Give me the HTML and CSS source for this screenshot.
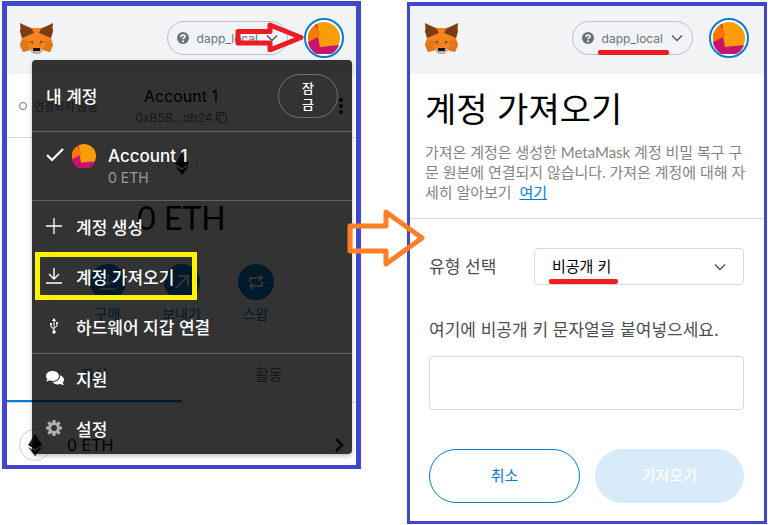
FILE: index.html
```html
<!DOCTYPE html>
<html lang="ko">
<head>
    <meta charset="UTF-8">
    <meta name="viewport" content="width=device-width, initial-scale=1.0">
    <title>계정 가져오기</title>
    <link rel="stylesheet" href="styles.css">
</head>
<body>

    <!-- Shared drawings -->
    <svg class="defs" aria-hidden="true">
        <symbol id="fox" viewBox="0 0 33 31">
            <path fill="#f5841f" d="M0 1 L12 5 H21 L33 1 V8 L31 15 L33 22 L30 29 L23 27 L19 30 H14 L10 27 L3 29 L0 22 L2 15 L0 8 Z"/>
            <path fill="#763e1a" d="M0 0 L12 6 L14 10 L9 12 L2 15 L0 8 L1 5 Z M33 0 L21 6 L19 10 L24 12 L31 15 L33 8 L32 5 Z"/>
            <path fill="#e2761b" d="M0 22 L8 23 L10 27 L3 29 Z M33 22 L25 23 L23 27 L30 29 Z"/>
            <path fill="#e4751f" d="M0 22 L2 17 L9 18 L8 23 Z M33 22 L31 17 L24 18 L25 23 Z"/>
            <path fill="#cd6116" d="M8 18 L14 20 L13 22 Z M25 18 L19 20 L20 22 Z"/>
            <path fill="#5c4a3a" d="M10 18 L13 18 L13 20 Z M23 18 L20 18 L20 20 Z"/>
            <path fill="#c0ad9e" d="M10 26 L13 26 H20 L23 26 L22 29 L19 31 H14 L11 29 Z"/>
            <path fill="#161616" d="M13 25 H20 V28 H13 Z"/>
        </symbol>
        <symbol id="blockie" viewBox="0 0 32 32">
            <circle cx="16" cy="16" r="16" fill="#f99d07"/>
            <path fill="#c8146c" d="M0 20 L10 14 L12 25 L31 23 A16 16 0 0 1 0 20 Z M7 3 L9 2 L10 9 Z"/>
            <path fill="#f77700" d="M7 3 A16 16 0 0 0 0 20 L10 15 L13 13 Z"/>
        </symbol>
        <symbol id="help" viewBox="0 0 12 12">
            <circle cx="6" cy="6" r="6" fill="#6a737d"/>
            <path d="M4 5 C4 2.5 8 2.5 8 4.6 C8 6 6 5.8 6 7.2" fill="none" stroke="#fff" stroke-width="1.6"/>
            <circle cx="6" cy="9.2" r="1" fill="#fff"/>
        </symbol>
        <symbol id="down" viewBox="0 0 12 8">
            <path d="M1 1.5 L6 6.5 L11 1.5" fill="none" stroke="currentColor" stroke-width="1.3"/>
        </symbol>
        <symbol id="eth" viewBox="0 0 14 22">
            <path fill="#343434" d="M7 0 L14 11 L7 15 L0 11 Z M7 22 L0 13 L7 17 L14 13 Z"/>
            <path fill="#141414" d="M7 0 L14 11 L7 15 Z M7 22 V17 L14 13 Z"/>
            <path fill="#000" d="M7 8 L14 11 L7 15 L0 11 Z" opacity=".5"/>
        </symbol>
        <symbol id="download" viewBox="0 0 16 16">
            <path d="M8 0 V11 M3 6 L8 11 L13 6 M0 15 H16" fill="none" stroke="currentColor" stroke-width="1.4"/>
        </symbol>
    </svg>

    <main class="board">

        <!-- Wallet home with the account menu open -->
        <section class="panel home">
            <header class="app-header">
                <svg class="logo"><use href="#fox"/></svg>
                <button class="network" type="button">
                    <svg class="icon-help"><use href="#help"/></svg>
                    <span class="network-name">dapp_local</span>
                    <svg class="icon-down"><use href="#down"/></svg>
                </button>
                <button class="avatar" type="button" aria-label="내 계정"><svg><use href="#blockie"/></svg></button>
            </header>

            <div class="account-bar">
                <div class="status"><i class="status-dot"></i>연결되지 않음</div>
                <div class="account">
                    <div class="account-title">Account 1</div>
                    <div class="address">0xB5B...db24
                        <svg class="icon-copy" viewBox="0 0 11 11"><path d="M3 3 H10.5 V10.5 H3 Z M3 8 H.5 V.5 H8 V3" fill="none" stroke="currentColor"/></svg>
                    </div>
                </div>
                <svg class="icon-more" viewBox="0 0 4 16"><circle cx="2" cy="2" r="2"/><circle cx="2" cy="8" r="2"/><circle cx="2" cy="14" r="2"/></svg>
            </div>

            <div class="overview">
                <span class="coin"><svg><use href="#eth"/></svg></span>
                <div class="balance">0 ETH</div>
                <div class="actions">
                    <button type="button" class="action">
                        <span class="round"><svg><use href="#download"/></svg></span>구매
                    </button>
                    <button type="button" class="action">
                        <span class="round"><svg viewBox="0 0 16 16"><path d="M2 14 L14 2 M4 2 H14 V12" fill="none" stroke="currentColor" stroke-width="2"/></svg></span>보내기
                    </button>
                    <button type="button" class="action">
                        <span class="round"><svg viewBox="0 0 16 16"><path d="M2 8 V4 H13 M11 1 L14 4 L11 7 M14 8 V12 H3 M5 9 L2 12 L5 15" fill="none" stroke="currentColor" stroke-width="2"/></svg></span>스왑
                    </button>
                </div>
            </div>

            <nav class="tabs">
                <button type="button" class="tab active">자산</button>
                <button type="button" class="tab">활동</button>
            </nav>

            <div class="asset">
                <span class="coin"><svg><use href="#eth"/></svg></span>
                <span class="asset-amount">0 ETH</span>
                <svg class="icon-next" viewBox="0 0 10 14"><path d="M2 1 L8 7 L2 13" fill="none" stroke="currentColor" stroke-width="2.5"/></svg>
            </div>

            <div class="menu">
                <div class="menu-header">
                    <span>내 계정</span>
                    <button type="button" class="lock">잠<br>금</button>
                </div>
                <div class="menu-account">
                    <svg class="icon-check" viewBox="0 0 18 14"><path d="M1 7 L6 12 L17 1" fill="none" stroke="#fff" stroke-width="2.2"/></svg>
                    <svg class="blockie"><use href="#blockie"/></svg>
                    <div>
                        <div class="menu-name">Account 1</div>
                        <div class="menu-balance">0 ETH</div>
                    </div>
                </div>
                <div class="menu-group">
                    <button type="button" class="menu-item">
                        <svg viewBox="0 0 16 16"><path d="M8 0 V16 M0 8 H16" stroke="currentColor" stroke-width="1.3"/></svg>계정 생성
                    </button>
                    <button type="button" class="menu-item marked">
                        <svg><use href="#download"/></svg>계정 가져오기
                    </button>
                    <button type="button" class="menu-item">
                        <svg viewBox="0 0 16 16"><g fill="none" stroke="currentColor"><path d="M8 2 V13 M8 11 L5 9 V6 M8 10 L11 8 V5"/></g><path fill="currentColor" d="M8 0 L10 3 H6 Z M4 5 H6 V7 H4 Z M10 4 H12 V6 H10 Z"/><circle cx="8" cy="14" r="1.7" fill="currentColor"/></svg>하드웨어 지갑 연결
                    </button>
                </div>
                <div class="menu-group">
                    <button type="button" class="menu-item">
                        <svg class="wide" viewBox="0 0 18 16"><path fill="currentColor" d="M6.5 1 C2.5 1 0 3.2 0 6 C0 7.2.6 8.3 1.3 9.1 C1.2 10 .6 10.800 0 11.500 C1.500 11.500 2.700 11 3.500 10.300 C4.400 10.700 5.400 11 6.500 11 C10.300 11 13 8.700 13 6 C13 3.200 10.300 1 6.500 1 Z"/><path fill="currentColor" d="M14 6 C14 9.500 10.700 12 6.500 12 C7.600 13.500 9.400 14.500 11.500 14.500 C12.600 14.500 13.600 14.200 14.500 13.700 C15.300 14.500 16.500 15 18 15 C17.300 14.300 16.800 13.500 16.700 12.700 C17.500 11.800 18 10.900 18 9.700 C18 7.800 16.400 6 14 5.300 Z"/></svg>지원
                    </button>
                    <button type="button" class="menu-item">
                        <svg class="gear" viewBox="0 0 16 16"><circle cx="8" cy="8" r="4.5" fill="none" stroke="currentColor" stroke-width="3"/><path d="M8 0 V3 M8 13 V16 M0 8 H3 M13 8 H16 M2.3 2.3 L4.5 4.5 M11.5 11.5 L13.7 13.7 M13.7 2.3 L11.5 4.5 M4.5 11.5 L2.3 13.7" stroke="currentColor" stroke-width="3"/></svg>설정
                    </button>
                </div>
            </div>
        </section>

        <!-- Import account form -->
        <section class="panel import">
            <header class="app-header">
                <svg class="logo"><use href="#fox"/></svg>
                <button class="network" type="button">
                    <svg class="icon-help"><use href="#help"/></svg>
                    <span class="network-name underlined">dapp_local</span>
                    <svg class="icon-down"><use href="#down"/></svg>
                </button>
                <button class="avatar" type="button" aria-label="내 계정"><svg><use href="#blockie"/></svg></button>
            </header>

            <div class="intro">
                <h1>계정 가져오기</h1>
                <p>가져온 계정은 생성한 MetaMask 계정 비밀 복구 구문 원본에 연결되지 않습니다. 가져온 계정에 대해 자세히 알아보기 <a href="#">여기</a></p>
            </div>

            <form class="import-form">
                <div class="type-row">
                    <label for="key-type">유형 선택</label>
                    <div class="select">
                        <select id="key-type">
                            <option>비공개 키</option>
                            <option>JSON 파일</option>
                        </select>
                        <svg class="icon-down"><use href="#down"/></svg>
                    </div>
                </div>
                <label class="key-label" for="private-key">여기에 비공개 키 문자열을 붙여넣으세요.</label>
                <input id="private-key" type="password">
                <div class="buttons">
                    <button type="button" class="cancel">취소</button>
                    <button type="submit" class="submit" disabled>가져오기</button>
                </div>
            </form>
        </section>

        <!-- Arrows between the steps -->
        <svg class="arrow arrow-red" viewBox="0 0 70 30"><path d="M4 9.5 H36 V3 L67 15.5 L36 28 V21 H4 Z"/></svg>
        <svg class="arrow arrow-orange" viewBox="0 0 78 58"><path d="M3 17 H39 V3 L75 29 L39 55 V42 H3 Z"/></svg>
    </main>

</body>
</html>
```

FILE: styles.css
```css
:root {
    --frame: #3f48cc; --blue: #037dd6; --line: #d6d9dc; --grey: #6a737d;
    --red: #ed1c24; --orange: #ff7f27; --yellow: #fff200;
    --font-family: Inter, "Noto Sans CJK KR", sans-serif;
    --font-narrow: Lato, "Noto Sans CJK KR", sans-serif;
}
*, *::after { margin: 0; padding: 0; box-sizing: border-box; }
body { font-family: var(--font-family); background: #fff; color: #000; }
button, input, select { font: inherit; color: inherit; background: none; border: none; }
button { cursor: pointer; }
svg { display: block; flex: none; }
.defs { position: absolute; width: 0; height: 0; }

.board { position: relative; display: grid; grid-template-columns: 359fr 360fr; align-items: start; gap: 46px; padding: 1px 1px 0 2px; }
.panel { position: relative; border: 5px solid var(--frame); }
.home { border-bottom-width: 4px; }
.import { margin-top: 1px; border-width: 4px 3px 3px; }

/* Header */
.app-header { display: flex; align-items: center; padding: 12px 12px 16px 13px; background: #f2f3f4; }
.import .app-header { padding: 12px 15px 16px; }
.logo { width: 33px; height: 31px; margin-right: auto; }
.network { display: flex; align-items: center; gap: 8px; height: 34px; padding: 0 9px; border: 1px solid #bbc0c5; border-radius: 17px; font-size: 12px; color: var(--grey); }
.network-name { position: relative; }
.icon-help { width: 12px; height: 12px; }
.icon-down { width: 12px; height: 8px; color: #4a5056; }
.underlined::after { content: ''; position: absolute; left: -4px; right: -6px; bottom: -9px; height: 5px; border-radius: 2px; background: var(--red); }
.avatar { display: grid; place-items: center; width: 40px; height: 40px; margin-left: 16px; border: 2px solid var(--blue); border-radius: 50%; background: #fff; }
.avatar svg { width: 32px; height: 32px; }

/* Home */
.account-bar { display: grid; grid-template-columns: 1fr auto 1fr; align-items: center; height: 64px; padding: 0 13px 0 12px; border-bottom: 1px solid var(--line); }
.status { display: flex; align-items: center; gap: 7px; font-size: 11px; color: var(--grey); white-space: nowrap; }
.status-dot { width: 8px; height: 8px; border: 1px solid var(--grey); border-radius: 50%; }
.account { text-align: center; }
.account-title { font-size: 16px; line-height: 24px; }
.address { display: flex; justify-content: center; align-items: center; gap: 3px; font-size: 12px; line-height: 20px; color: var(--grey); }
.icon-copy { width: 11px; height: 11px; }
.icon-more { width: 4px; height: 16px; justify-self: end; }
.overview { display: flex; flex-direction: column; align-items: center; padding-top: 10px; }
.coin { display: grid; place-items: center; width: 32px; height: 32px; border: 1px solid #d0d0d0; border-radius: 50%; }
.coin svg { width: 14px; height: 22px; }
.balance { margin: 18px 0 26px; font-family: var(--font-narrow); font-size: 32px; line-height: 40px; }
.actions { display: flex; gap: 14px; }
.action { display: flex; flex-direction: column; align-items: center; gap: 2px; width: 60px; font-size: 14px; line-height: 24px; color: var(--blue); }
.round { display: grid; place-items: center; width: 36px; height: 36px; border-radius: 50%; background: var(--blue); color: #fff; }
.round svg { width: 16px; height: 16px; }
.tabs { display: flex; margin-top: 20px; border-bottom: 1px solid var(--line); }
.tab { flex: 1; height: 56px; font-size: 15px; color: var(--grey); border-bottom: 2px solid transparent; }
.tab.active { color: var(--blue); border-color: var(--blue); }
.asset { display: flex; align-items: center; gap: 16px; padding: 26px 12px 4px; font-size: 16px; }
.icon-next { width: 10px; height: 14px; margin-left: auto; color: #24292e; }

/* Account menu */
.menu { position: absolute; top: 54px; left: 25px; right: 4px; border-radius: 4px; background: rgba(0, 0, 0, 0.8); color: #fff; font-size: 17px; box-shadow: 0 2px 4px rgba(0, 0, 0, 0.25); }
.menu-header, .menu-account, .menu-group { border-bottom: 1px solid #606060; }
.menu-header { display: flex; justify-content: space-between; align-items: center; height: 72px; padding: 0 14px; font-weight: 500; }
.lock { width: 60px; height: 44px; border: 1px solid var(--grey); border-radius: 22px; font-size: 13px; line-height: 16px; }
.menu-account { display: flex; height: 69px; padding: 12px 14px; }
.icon-check { width: 18px; height: 14px; margin: 4px 8px 0 0; }
.blockie { width: 24px; height: 24px; margin-right: 12px; }
.menu-name { font-size: 17px; font-weight: 500; line-height: 24px; }
.menu-balance { font-size: 14px; line-height: 20px; color: #9b9b9b; }
.menu-group { padding: 1px 0; }
.menu-group:last-child { padding: 0; border-bottom: none; }
.menu-item { position: relative; display: flex; align-items: center; gap: 14px; width: 100%; height: 50px; padding: 0 14px 2px; font-weight: 500; }
.menu-item svg { width: 16px; height: 16px; }
.menu-item svg.wide { width: 18px; margin-right: -2px; }
.menu-item svg.gear { color: #b0b0b0; }
.marked::after { content: ''; position: absolute; left: 3px; top: 0; width: 162px; height: 48px; border: 5px solid var(--yellow); }

/* Import form */
.intro { padding: 12px 15px 16px; border-bottom: 1px solid var(--line); }
.intro h1 { margin-bottom: 8px; font-size: 34px; font-weight: 400; line-height: 48px; }
.intro p { font-family: var(--font-narrow); font-size: 15px; line-height: 20px; color: #848484; }
.intro a { margin-left: 4px; color: var(--blue); }
.import-form { padding: 29px 20px 18px 19px; font-size: 17px; line-height: 24px; color: #4d4d4d; }
.type-row { display: flex; justify-content: space-between; align-items: center; }
.select { position: relative; width: 210px; }
.select select { width: 100%; height: 37px; padding: 0 17px; border: 1px solid var(--line); border-radius: 4px; appearance: none; font-size: 15px; color: #000; }
.select .icon-down { position: absolute; right: 18px; top: 15px; }
.select::after { content: ''; position: absolute; left: 15px; bottom: 1px; width: 69px; height: 5px; border-radius: 2px; background: var(--red); }
.key-label { display: block; margin: 33px 0 14px; }
#private-key { display: block; width: 100%; height: 54px; padding: 0 16px; border: 1px solid var(--line); border-radius: 4px; }
.buttons { display: flex; gap: 15px; margin-top: 39px; }
.buttons button { flex: 1; height: 54px; border-radius: 27px; font-size: 15px; }
.cancel { border: 1px solid var(--blue); color: var(--blue); }
.submit { background: #d7ebf9; color: #fff; font-weight: 500; }

/* Arrows */
.arrow { position: absolute; fill: none; stroke-width: 5; stroke-linejoin: round; }
.arrow-red { left: 234px; top: 22px; width: 70px; height: 30px; stroke: var(--red); }
.arrow-orange { left: 347px; top: 209px; width: 78px; height: 58px; stroke: var(--orange); }
```
